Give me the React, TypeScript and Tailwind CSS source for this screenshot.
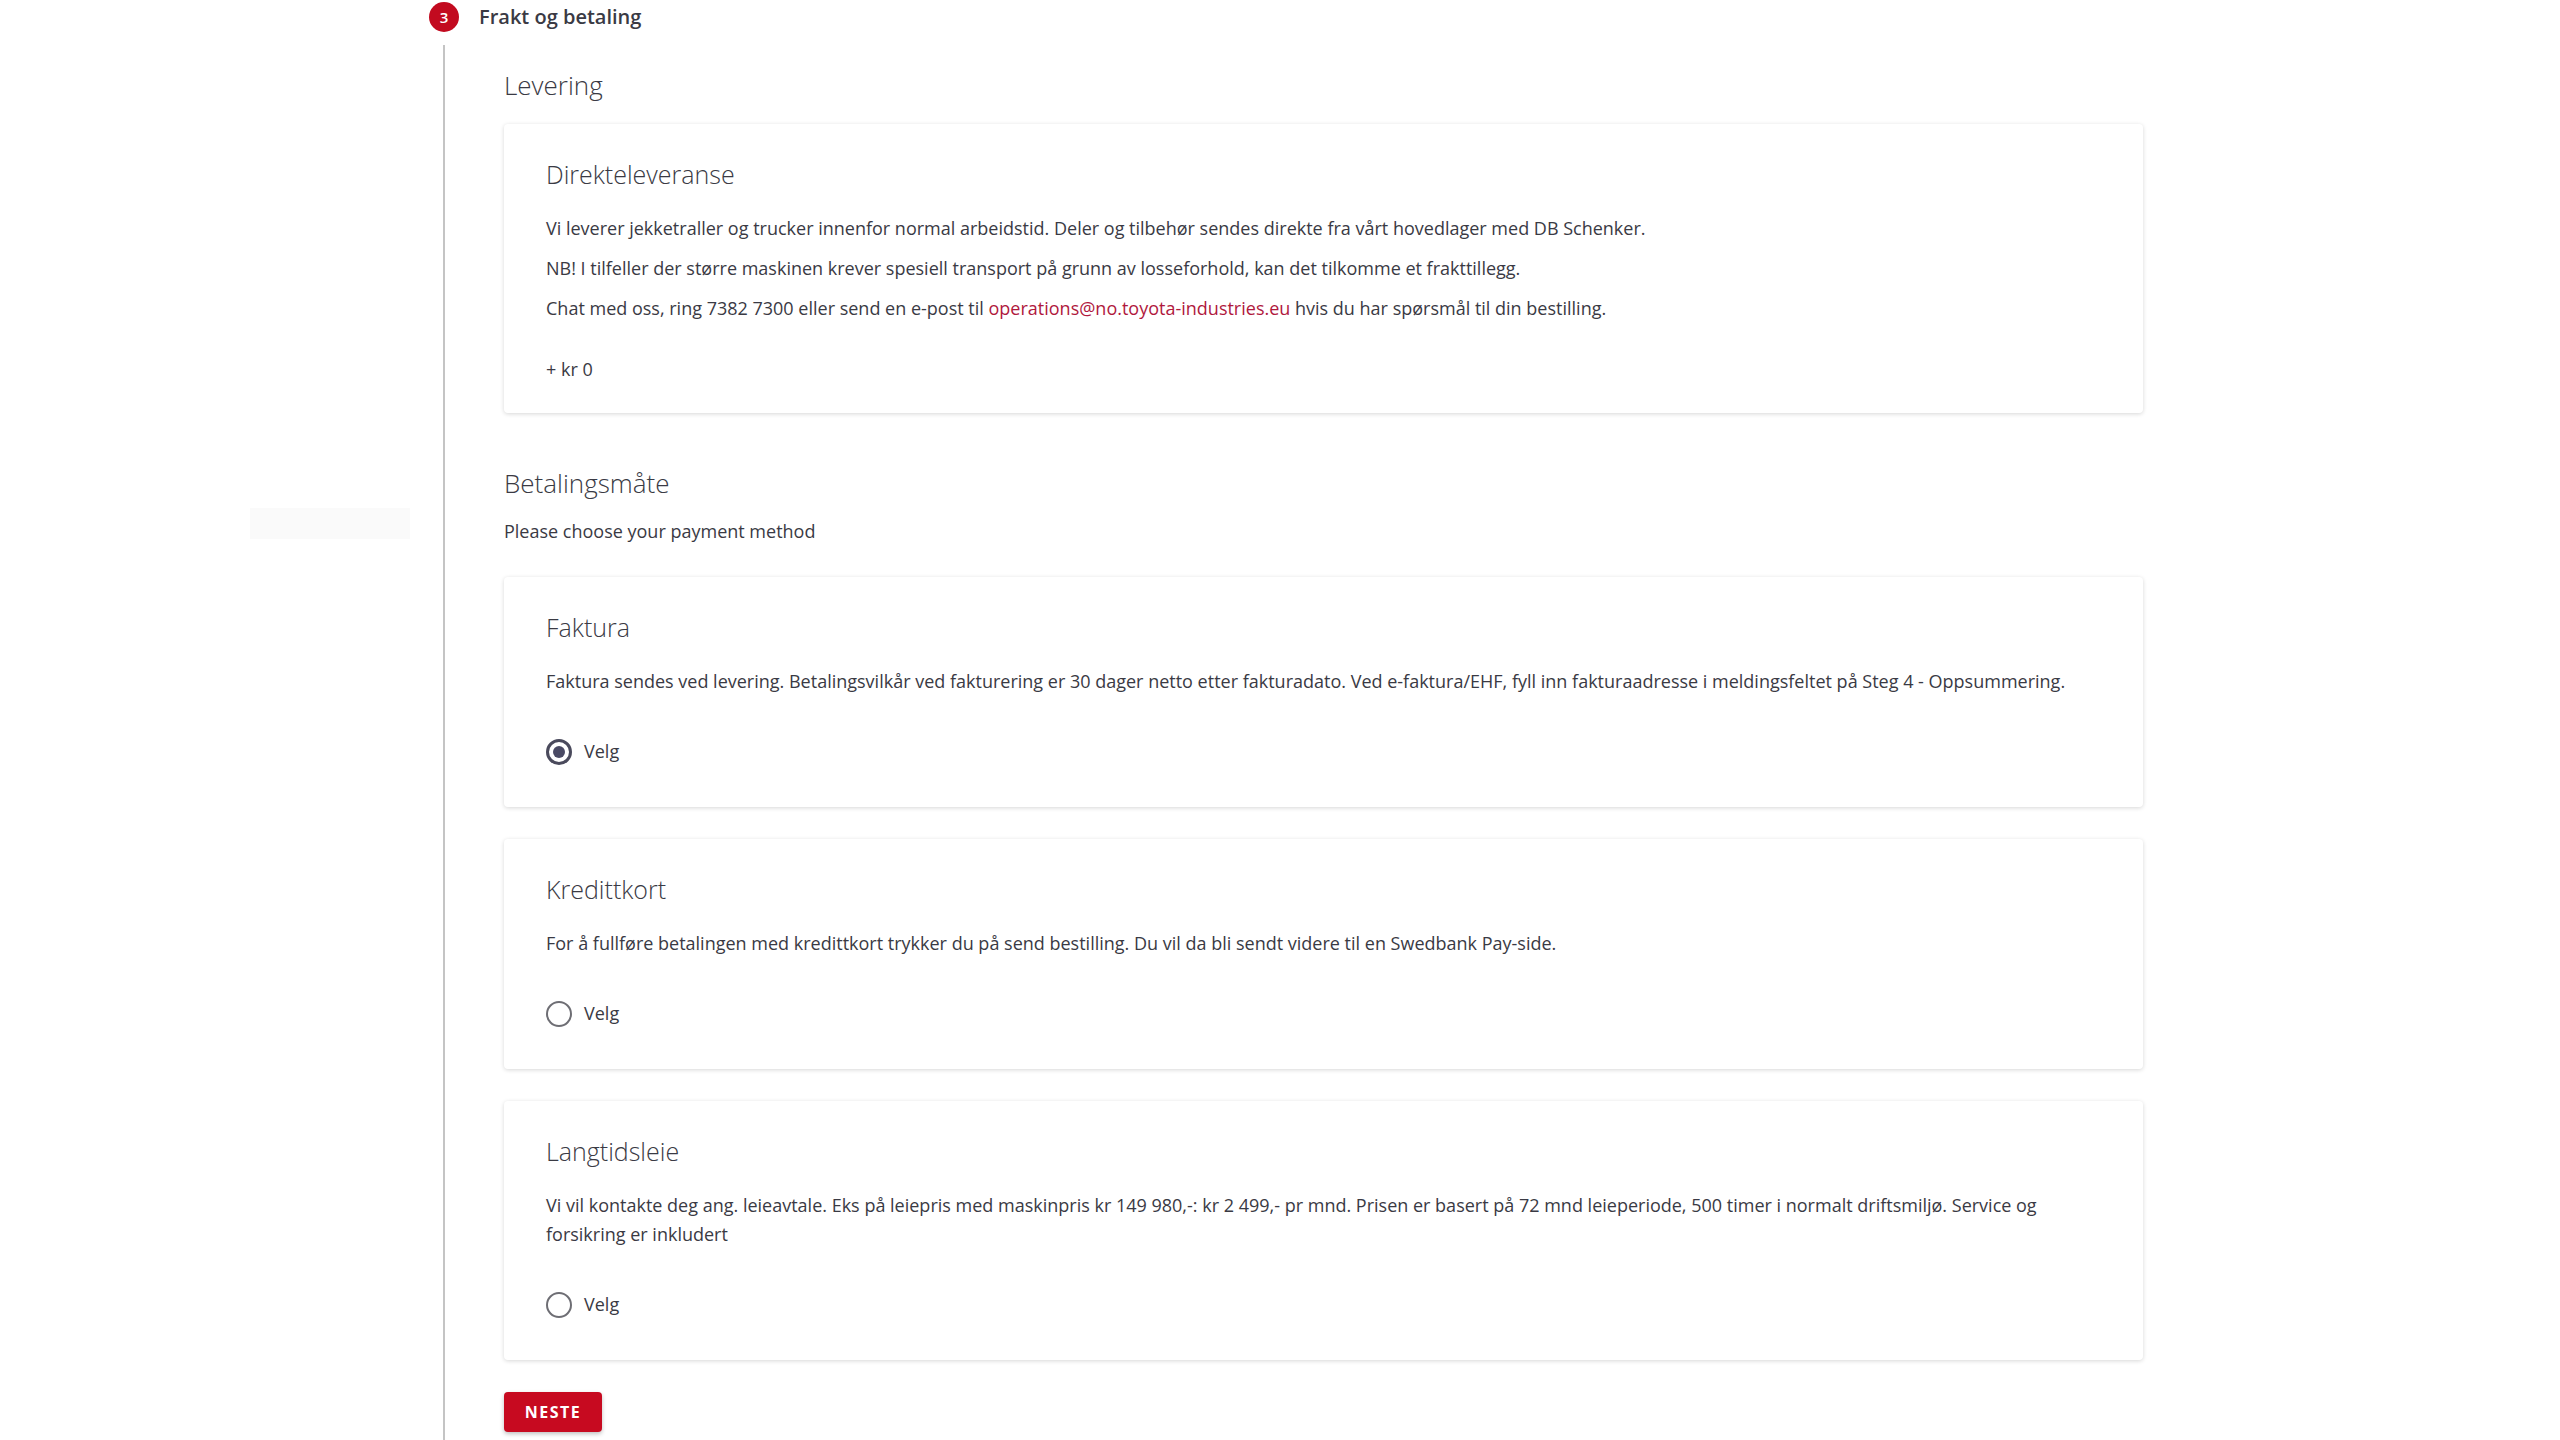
const FONT = { fontFamily: '"Open Sans", "Noto Sans", sans-serif' };

function Card({ title, children, last = 'pb-[41px]' }: { title: string; children: React.ReactNode; last?: string }) {
  return (
    <div className={`w-[1639px] rounded-[4px] bg-white shadow-[0_1px_4px_rgba(0,0,0,0.16)] px-[42px] pt-[33px] ${last}`}>
      <h3 className="text-[25px] leading-[34px] font-light text-[#3a3a44]">{title}</h3>
      <div className="mt-[23px]">{children}</div>
    </div>
  );
}

function P({ children, className = '' }: { children: React.ReactNode; className?: string }) {
  return <p className={`text-[18px] leading-[29px] text-[#3a3a44] ${className}`}>{children}</p>;
}

function Radio({ checked }: { checked?: boolean }) {
  return (
    <label className="mt-[41px] flex h-[29px] items-center gap-[12px] cursor-pointer">
      {checked ? (
        <span className="flex h-[26px] w-[26px] items-center justify-center rounded-full border-[3px] border-[#4a4a5c]">
          <span className="h-[12px] w-[12px] rounded-full bg-[#4a4a64]" />
        </span>
      ) : (
        <span className="h-[26px] w-[26px] rounded-full border-2 border-[#6e6e74]" />
      )}
      <span className="text-[18px] leading-[29px] text-[#3a3a44]">Velg</span>
    </label>
  );
}

export default function App() {
  return (
    <div className="relative min-h-[1440px] bg-white pl-[429px]" style={FONT}>
      {/* faint placeholder on the left */}
      <div className="absolute left-[250px] top-[508px] h-[31px] w-[160px] bg-[#fafafa]" />

      {/* step header */}
      <div className="flex h-[34px] items-center">
        <span className="flex h-[30px] w-[30px] items-center justify-center rounded-full bg-[#c20a1f] text-[15px] font-semibold text-white">3</span>
        <span className="ml-[20px] text-[20px] leading-[34px] font-semibold text-[#3a3a44]">Frakt og betaling</span>
      </div>

      <div className="ml-[14px] mt-[11px] border-l-2 border-[#c4c4c4] pl-[59px] pb-[8px]">
        <h2 className="pt-[22px] text-[26px] leading-[36px] font-light text-[#3a3a44]">Levering</h2>

        <div className="mt-[21px]">
          <Card title="Direkteleveranse" last="pb-[29px]">
            <P className="mb-[11px]">Vi leverer jekketraller og trucker innenfor normal arbeidstid. Deler og tilbehør sendes direkte fra vårt hovedlager med DB Schenker.</P>
            <P className="mb-[11px]">NB! I tilfeller der større maskinen krever spesiell transport på grunn av losseforhold, kan det tilkomme et frakttillegg.</P>
            <P>
              Chat med oss, ring 7382 7300 eller send en e-post til{' '}
              <a href="#" className="text-[#b0183d]">operations@no.toyota-industries.eu</a> hvis du har spørsmål til din bestilling.
            </P>
            <P className="mt-[32px]">+ kr 0</P>
          </Card>
        </div>

        <h2 className="mt-[52px] text-[26px] leading-[36px] font-light text-[#3a3a44]">Betalingsmåte</h2>
        <P className="mt-[16px]">Please choose your payment method</P>

        <div className="mt-[31px] flex flex-col gap-[32px]">
          <Card title="Faktura">
            <P>Faktura sendes ved levering. Betalingsvilkår ved fakturering er 30 dager netto etter fakturadato. Ved e-faktura/EHF, fyll inn fakturaadresse i meldingsfeltet på Steg 4 - Oppsummering.</P>
            <Radio checked />
          </Card>
          <Card title="Kredittkort">
            <P>For å fullføre betalingen med kredittkort trykker du på send bestilling. Du vil da bli sendt videre til en Swedbank Pay-side.</P>
            <Radio />
          </Card>
          <Card title="Langtidsleie">
            <P>Vi vil kontakte deg ang. leieavtale. Eks på leiepris med maskinpris kr 149 980,-: kr 2 499,- pr mnd. Prisen er basert på 72 mnd leieperiode, 500 timer i normalt driftsmiljø. Service og forsikring er inkludert</P>
            <Radio />
          </Card>
        </div>

        <button className="mt-[32px] h-[40px] w-[98px] rounded-[4px] bg-[#c70a20] text-[16px] font-bold tracking-[1.5px] text-white shadow-[0_2px_4px_rgba(0,0,0,0.25)]">
          NESTE
        </button>
      </div>
    </div>
  );
}
